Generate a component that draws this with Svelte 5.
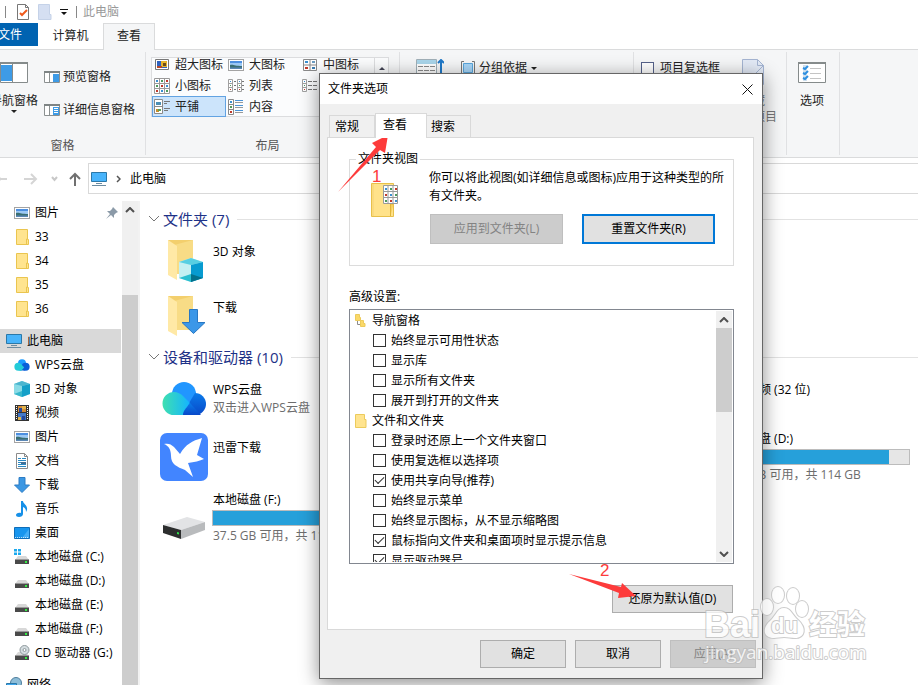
<script>
  const quick = [
    { icon: 'picture', name: '图片', pinned: true },
    { icon: 'folder', name: '33' },
    { icon: 'folder', name: '34' },
    { icon: 'folder', name: '35' },
    { icon: 'folder', name: '36' },
  ];
  const computer = [
    { icon: 'cloud', name: 'WPS云盘' },
    { icon: 'cube', name: '3D 对象' },
    { icon: 'film', name: '视频' },
    { icon: 'picture', name: '图片' },
    { icon: 'doc', name: '文档' },
    { icon: 'down', name: '下载' },
    { icon: 'music', name: '音乐' },
    { icon: 'desktop', name: '桌面' },
    { icon: 'sysdrive', name: '本地磁盘 (C:)' },
    { icon: 'drive', name: '本地磁盘 (D:)' },
    { icon: 'drive', name: '本地磁盘 (E:)' },
    { icon: 'drive', name: '本地磁盘 (F:)' },
    { icon: 'cd', name: 'CD 驱动器 (G:)' },
  ];
  const views = [
    { icon: 'xl', name: '超大图标' },
    { icon: 'picture', name: '大图标' },
    { icon: 'medium', name: '中图标' },
    { icon: 'small', name: '小图标' },
    { icon: 'list', name: '列表' },
    { icon: 'details', name: '' },
    { icon: 'tiles', name: '平铺', on: true },
    { icon: 'content', name: '内容' },
  ];
  const folders = [
    { icon: 'bigcube', name: '3D 对象' },
    { icon: 'bigdown', name: '下载' },
  ];
  const devices = [
    { icon: 'bigcloud', name: 'WPS云盘', note: '双击进入WPS云盘', col: 1, row: 1 },
    { icon: '', name: '腾讯视频 (32 位)', note: '', col: 3, row: 1 },
    { icon: 'bird', name: '迅雷下载', note: '', col: 1, row: 2 },
    { icon: 'bigdrive', name: '本地磁盘 (D:)', note: '12.4 GB 可用，共 114 GB', used: 89, col: 3, row: 2 },
    { icon: 'bigdrive', name: '本地磁盘 (F:)', note: '37.5 GB 可用，共 114 GB', used: 67, col: 1, row: 3 },
  ];
  let settings = $state([
    { icon: 'tree', name: '导航窗格' },
    { name: '始终显示可用性状态', on: false },
    { name: '显示库', on: false },
    { name: '显示所有文件夹', on: false },
    { name: '展开到打开的文件夹', on: false },
    { icon: 'minifolder', name: '文件和文件夹' },
    { name: '登录时还原上一个文件夹窗口', on: false },
    { name: '使用复选框以选择项', on: false },
    { name: '使用共享向导(推荐)', on: true },
    { name: '始终显示菜单', on: false },
    { name: '始终显示图标，从不显示缩略图', on: false },
    { name: '鼠标指向文件夹和桌面项时显示提示信息', on: true },
    { name: '显示驱动器号', on: true },
  ]);
  const three = [0, 1, 2];
  const dots = ['#3a8fd0', '#4d9a5c', '#c0392b'];
</script>

{#snippet icon(name)}
  {#if name === 'picture'}
    <svg width="16" height="16" viewBox="0 0 16 16"><rect x=".5" y="2.500" width="15" height="11" fill="#fff" stroke="#a3a3a3" /><rect x="2" y="4" width="12" height="8" fill="#9cc8f4" /><path d="M2 4h12v2H2z" fill="#4d8fe0" /><path d="M2 8c3-1 5 1 12 1v3H2z" fill="#3b6f72" /><path d="M2 10.500h12V12H2z" fill="#5b87b5" /></svg>
  {:else if name === 'folder'}
    <svg width="16" height="16" viewBox="0 0 16 16"><path d="M2.500.5h11v10h1v5h-12z" fill="#ffe48f" stroke="#eac54f" /><path d="M12.500 15v-5h1" fill="none" stroke="#eac54f" /></svg>
  {:else if name === 'minifolder'}
    <svg width="12" height="14" viewBox="0 0 12 14"><path d="M.5.5h9v5h1.500v8H.5z" fill="#ffe48f" stroke="#eccb5c" /></svg>
  {:else if name === 'tree'}
    <svg width="12" height="14" viewBox="0 0 12 14"><path d="M2.500 6v4.500H6" fill="none" stroke="#8c8c8c" /><path d="M.5.5h4v3h1v3h-5zM5.500 6.500h3v3h1.500v3H5.500z" fill="#fbd968" stroke="#eccb5c" /></svg>
  {:else if name === 'cloud'}
    <svg width="16" height="16" viewBox="0 0 44 40"><path d="M21 17a11 11 0 0 1 9 18H15z" fill="#0a58d6" /><circle cx="22" cy="15" r="11" fill="#1c9cff" /><circle cx="32" cy="25" r="11" fill="#0a5fd8" /><path d="M12 14a11 11 0 0 0 0 22h8l8-9-8-9a12 12 0 0 0-8-4z" fill="#23cbd8" /></svg>
  {:else if name === 'cube'}
    <svg width="16" height="16" viewBox="0 0 16 16"><path d="M0 3l8-3 8 3v10l-8 3-8-3z" fill="#8adbe6" /><path d="M0 3l8-3 8 3-8 2z" fill="#4cb6cf" /><path d="M8 5l8-2v10l-8 3z" fill="#14a0c8" /><path d="M0 13l8-3v6z" fill="#36b7cb" /></svg>
  {:else if name === 'film'}
    <svg width="16" height="16" viewBox="0 0 16 16"><path d="M1 0h14v16H1z" fill="#333" /><path d="M2.500 1v14M13.500 1v14" stroke="#fff" stroke-dasharray="1 1" /><path d="M4 1h8v6H4z" fill="#d38b38" /><path d="M4 8h8v7H4z" fill="#4378c9" /><path d="M5 3h3v4H5zM8 11h3v4H8z" fill="#25489b" /><path d="M8 1h4v3H8zM4 12h3v3H4z" fill="#e2b44c" /></svg>
  {:else if name === 'doc'}
    <svg width="16" height="16" viewBox="0 0 16 16"><path d="M2.500.5h8l3 3v12h-11z" fill="#fff" stroke="#8b8b8b" /><path d="M10.500.5v3h3" fill="none" stroke="#8b8b8b" /><path d="M4 5.500h3m1 0h4M4 7.500h8M4 9.500h3M4 11.500h8M4 13.500h8" stroke="#2b8ac4" /><path d="M7 9h5v2H7z" fill="#446f95" /></svg>
  {:else if name === 'down'}
    <svg width="16" height="16" viewBox="0 0 16 16"><path d="M5 .5h6V8h4.500L8 15.500.5 8H5z" fill="#3b97e3" stroke="#2c7cc4" /></svg>
  {:else if name === 'music'}
    <svg width="16" height="16" viewBox="0 0 16 16"><path d="M7 0h2c0 3 5 4 4 9l-1 2c0-3-1-4-3-5v7c0 2-2 3-4 3s-3-1-3-2 2-3 5-2z" fill="#1690e8" /></svg>
  {:else if name === 'desktop'}
    <svg width="16" height="16" viewBox="0 0 16 16"><path d="M.5 2.500h15v11H.5z" fill="#1795ee" stroke="#0f6db8" /><path d="M8 13l7-9v9z" fill="#43adf6" /><path d="M1 12.500h14" stroke="#fff" stroke-dasharray="1 1" opacity=".7" /></svg>
  {:else if name === 'drive' || name === 'sysdrive' || name === 'cd'}
    <svg width="16" height="16" viewBox="0 0 16 16"><path d="M4 7h8l3 4H1z" fill="#d8d8d8" /><path d="M1 11h14v4H1z" fill="#4a4a4a" /><path d="M1 10h14v1H1z" fill="#999" /><path d="M11 12h2v2h-2z" fill="#3e4" />
      {#if name === 'sysdrive'}<path d="M0 0h3v2.500H0zM4 0h3v2.500H4zM0 3.500h3V6H0zM4 3.500h3V6H4z" fill="#1ba9ee" />{/if}
      {#if name === 'cd'}<circle cx="10.500" cy="5" r="4.500" fill="#d5dde0" stroke="#8e999d" /><circle cx="10.500" cy="5" r="1.500" fill="#fff" stroke="#8e999d" />{/if}
    </svg>
  {:else if name === 'monitor'}
    <svg width="16" height="16" viewBox="0 0 16 16"><path d="M.5 1.500h15v9H.5z" fill="#48b4fb" stroke="#2b78a8" /><path d="M5 12.500h6M1 14.500h14" stroke="#6c8ba0" /></svg>
  {:else if name === 'network'}
    <svg width="16" height="16" viewBox="0 0 16 16"><circle cx="10" cy="6" r="5.500" fill="#8dbdd8" stroke="#4d7d9c" /><path d="M.5 6.500h10v6H.5z" fill="#3ea6ee" stroke="#2b78a8" /></svg>
  {:else if name === 'xl'}
    <svg width="16" height="16" viewBox="0 0 16 16"><path d="M1.500 2.500h13v10h-13z" fill="#fff" stroke="#777" /><path d="M3 4h10v7H3z" fill="#2f62bf" /><path d="M7 4h6v6H7z" fill="#e7b52b" /><path d="M3 9h5v2H3z" fill="#b7472a" /><path d="M9 6h3v3H9z" fill="#6a4a1a" /></svg>
  {:else if name === 'medium'}
    <svg width="16" height="16" viewBox="0 0 16 16"><path d="M1.500 2.500h13v11h-13zM8 2v12M1 8h14" fill="#fff" stroke="#8a8a8a" /><path d="M3 4h3v2H3z" fill="#3a8fd0" /><path d="M10 4h3v2h-3z" fill="#6b9bc0" /><path d="M3 10h3v2H3z" fill="#c0392b" /><path d="M10 10h3v2h-3z" fill="#3a7bb0" /></svg>
  {:else if name === 'small'}
    <svg width="16" height="16" viewBox="0 0 16 16"><path d="M.5.5h15v15H.5zM5.500 0v16M10.500 0v16M0 5.500h16M0 10.500h16" fill="#fff" stroke="#9a9a9a" />{#each three as r}{#each three as c}<rect x={2 + c * 5} y={2 + r * 5} width="2" height="2" fill={dots[(r + c) % 3]} />{/each}{/each}</svg>
  {:else if name === 'list' || name === 'details'}
    <svg width="16" height="16" viewBox="0 0 16 16"><path d="M.5 1.500h4v12h-4zM0 5.500h5M0 9.500h5" fill="#fff" stroke="#a0a0a0" />{#each three as r}<rect x="2" y={3 + r * 4} width="1" height="1" fill={dots[r]} /><path d={`M6 ${3.5 + r * 4}h${name === 'list' ? 2 : 10}`} stroke="#777" stroke-dasharray="4 1" />{/each}
      {#if name === 'list'}<path d="M9.500 1.500h4v12h-4zM9 5.500h5M9 9.500h5" fill="#fff" stroke="#a0a0a0" />{#each three as r}<rect x="11" y={3 + r * 4} width="1" height="1" fill={dots[r]} /><path d={`M14 ${3.5 + r * 4}h2`} stroke="#777" />{/each}{/if}</svg>
  {:else if name === 'tiles'}
    <svg width="16" height="16" viewBox="0 0 16 16"><path d="M.5.5h8v14h-8zM0 7.500h9" fill="#fff" stroke="#8a8a8a" /><path d="M2 3h5v3H2z" fill="#4c8fb5" /><path d="M2 10h3v3H2z" fill="#c98e2c" /><path d="M4 10h3v2H4z" fill="#58a05c" /><path d="M10 2.500h6M10 4.500h3M10 9.500h6M10 11.500h4" stroke="#777" /></svg>
  {:else if name === 'content'}
    <svg width="16" height="16" viewBox="0 0 16 16"><path d="M.5.5h5v15h-5zM0 5.500h6M0 10.500h6" fill="#fff" stroke="#8a8a8a" />{#each three as r}<rect x="2" y={2 + r * 5} width="2" height="2" fill={dots[r]} /><path d={`M7 ${1.5 + r * 5}h8`} stroke="#4a94d8" />{/each}<path d="M7 3.500h8M7 8.500h8M7 13.500h8" stroke="#999" /></svg>
  {:else if name === 'pane' || name === 'panelines'}
    <svg width="16" height="12" viewBox="0 0 16 12"><path d="M.5.5h15v11H.5z" fill="#fff" stroke="#8b9090" /><path d="M0 0h16v2H0z" fill="#7e8484" /><path d="M5.500 2v9" stroke="#8b9090" /><path d="M9 3h6v8H9z" fill="#3e9be6" />{#if name === 'panelines'}<path d="M10 4.500h4M10 6.500h4M10 8.500h4" stroke="#fff" />{/if}</svg>
  {:else if name === 'bigcube' || name === 'bigdown'}
    <svg width="48" height="48" viewBox="0 0 48 48"><path d="M8 3h25v34H12z" fill="#f3cf6d" /><path d="M14 8l19-5v34H17z" fill="#f8dc86" /><path d="M8 3l9 6v34l-9-5z" fill="#ffe9a6" />
      {#if name === 'bigcube'}<path d="M19 25l12-4 12 4v16l-12 4-12-4z" fill="#c4f0f2" /><path d="M19 25l12-4 12 4-12 3z" fill="#57cfe2" /><path d="M31 28l12-3v16l-12 4z" fill="#079bd0" /><path d="M19 41l12-4v8z" fill="#2bbfd0" /><path d="M31 37l12 4-12 4z" fill="#03718c" />
      {:else}<path d="M29.500 16.500h8v13H45L33.500 40.500 22 29.500h7.500z" fill="#3b97e8" stroke="#2878c4" />{/if}
    </svg>
  {:else if name === 'bigcloud'}
    <svg width="48" height="48" viewBox="0 0 48 48"><defs><linearGradient id="cg" x1="0" y1="0" x2="1" y2="0"><stop offset="0" stop-color="#3fe0b0" /><stop offset="1" stop-color="#14b4ff" /></linearGradient><linearGradient id="cb" x1="0" y1="0" x2="0" y2="1"><stop offset="0" stop-color="#0b7bea" /><stop offset="1" stop-color="#0848c8" /></linearGradient></defs>
      <circle cx="24" cy="19" r="12" fill="#2196ff" /><path d="M35 18a11 11 0 0 1 0 22H24l5-12z" fill="url(#cb)" /><path d="M14 17a11.500 11.500 0 0 0 0 23h10c0-2 0-4 6-12l-7-7a14 14 0 0 0-9-4z" fill="url(#cg)" /><path d="M23 40c0-4 3-7 7-12l11 12z" fill="url(#cb)" /></svg>
  {:else if name === 'bird'}
    <svg width="48" height="48" viewBox="0 0 48 48"><rect width="48" height="48" rx="7" fill="#4285ff" /><path d="M4 11c4-1 7 0 10 3l6 7c6-10 12-13 22-16l-5 17 7 4c-4 2-10 3-16 4l5 14-8-7c-8-3-14-6-14-14 0-6-2-10-7-12z" fill="#fff" /></svg>
  {:else if name === 'bigdrive'}
    <svg width="48" height="48" viewBox="0 0 48 48"><path d="M3 31l24-8 18 5-24 8z" fill="#e2e3e5" /><path d="M21 36l24-8v8l-24 9z" fill="#b9bbbd" /><path d="M3 31l18 5v9L3 39z" fill="#2c2e2e" /><path d="M17 38l2 .5v2l-2-.5z" fill="#2fe04a" /></svg>
  {/if}
{/snippet}

{#snippet chevron(dir)}
  <svg width="10" height="6" viewBox="0 0 10 6"><path d={dir === 'up' ? 'M1 5l4-4 4 4' : 'M1 1l4 4 4-4'} fill="none" stroke="#505050" stroke-width="2" /></svg>
{/snippet}

{#snippet section(title, items)}
  <section>
    <h2><svg width="12" height="8" viewBox="0 0 12 8"><path d="M1 1l5 5 5-5" fill="none" stroke="#777" /></svg>{title}</h2>
    <div class="items">
      {#each items as item}
        <div class="item" style:grid-column={item.col ?? 1} style:grid-row={item.row ?? 'auto'}>
          <span class="pic">{@render icon(item.icon)}</span>
          <div class="info">
            <span>{item.name}</span>
            {#if item.used}<div class="bar"><div style:width="{item.used}%"></div></div>{/if}
            <span class="note">{item.note ?? ''}</span>
          </div>
        </div>
      {/each}
    </div>
  </section>
{/snippet}

<div class="window">
  <header class="title">
    <i class="tick"></i>
    <svg width="14" height="16" viewBox="0 0 14 16"><path d="M1.500.5h8l3 3v12h-11z" fill="#fff" stroke="#777" /><path d="M9.500.5v3h3" fill="none" stroke="#777" /><path d="M4 9l2 2 5-5" fill="none" stroke="#ef5a1c" stroke-width="2" /></svg>
    <svg width="14" height="16" viewBox="0 0 14 16"><path d="M.5.5h11v10h1.500v5H.5z" fill="#d5dff2" stroke="#c5d2e8" /></svg>
    <svg width="8" height="6" viewBox="0 0 8 6"><path d="M0 0h8v1H0zM1 3h6L4 6z" fill="#111" /></svg>
    <i class="tick"></i>
    <span>此电脑</span>
  </header>

  <nav class="tabs">
    <button class="file">文件</button>
    <button class="computer">计算机</button>
    <button class="view">查看</button>
  </nav>

  <div class="ribbon">
    <div class="group panes">
      <div class="content">
        <button class="big navpane">
          <svg width="28" height="22" viewBox="0 0 28 22"><path d="M.5.5h27v20H.5z" fill="#fff" stroke="#858b8b" /><path d="M0 0h28v2H0z" fill="#858b8b" /><path d="M1 3h11v16H1z" fill="#3e9be6" /><path d="M12.500 2v18" stroke="#858b8b" /></svg>
          <span>导航窗格</span>
          <svg width="6" height="3" viewBox="0 0 6 3"><path d="M0 0h6L3 3z" fill="#222" /></svg>
        </button>
        <div class="stack">
          <button>{@render icon('pane')}预览窗格</button>
          <button>{@render icon('panelines')}详细信息窗格</button>
        </div>
      </div>
      <div class="label">窗格</div>
    </div>
    <div class="group layout">
      <div class="gallery">
        <div class="views">
          {#each views as v}
            <button class:on={v.on} aria-label={v.name || v.icon}>{@render icon(v.icon)}{v.name}</button>
          {/each}
        </div>
        <button class="more" aria-label="up"><svg width="6" height="3" viewBox="0 0 6 3"><path d="M0 3h6L3 0z" fill="#445" /></svg></button>
      </div>
      <div class="label">布局</div>
    </div>
    <div class="group current">
      <svg width="28" height="32" viewBox="0 0 28 32"><path d="M.5.5h20v30H.5z" fill="#fff" stroke="#a0b0b8" /><path d="M1 1h19v4H1z" fill="#a9d5ea" /><path d="M2 7.500h17M2 11.500h17M2 15.500h17" stroke="#8a8a8a" stroke-dasharray="5 1" /><path d="M25 2v28M22 4l3-3 3 3" fill="none" stroke="#1e78c8" stroke-width="2" /></svg>
      <button><svg width="14" height="14" viewBox="0 0 14 14"><path d="M3 .5H.5v13H3M11 .5h2.500v13H11" fill="none" stroke="#777" /><path d="M2.500 2.500h9v9h-9z" fill="#a8d6f8" stroke="#58a6dc" /></svg>分组依据<svg width="6" height="3" viewBox="0 0 6 3"><path d="M0 0h6L3 3z" fill="#222" /></svg></button>
    </div>
    <div class="group show">
      <label><input type="checkbox" />项目复选框</label>
      <button class="hide"><svg width="22" height="26" viewBox="0 0 22 26"><path d="M.5.5h15l6 6v19H.5z" fill="#e3eaf6" stroke="#a5b5d2" /><path d="M15.500.5v6h6L10 18" fill="none" stroke="#a5b5d2" /></svg><span>隐藏<br />所选项目</span></button>
    </div>
    <div class="group options">
      <button class="big">
        <svg width="28" height="22" viewBox="0 0 28 22"><path d="M.5.5h27v20H.5z" fill="#fff" stroke="#858b8b" /><path d="M0 0h28v2H0z" fill="#858b8b" /><path d="M5 3h4v16H5z" fill="#cfe0ee" /><path d="M12 6.500h11M12 11.500h11M12 16.500h11" stroke="#c4c4c4" /><path d="M5 6l2 1 3-3M5 11l2 1 3-3M5 16l2 1 3-3" fill="none" stroke="#2d8fe0" stroke-width="2" /></svg>
        <span>选项</span>
      </button>
    </div>
  </div>

  <div class="address">
    <svg class="arrows" width="82" height="14" viewBox="0 0 82 14" fill="none"><path d="M0 7h7M0 5l-2 2 2 2M24 7h12M31 2l5 5-5 5" stroke="#d5d5d5" stroke-width="2" /><path d="M52 5l2.500 3L57 5" stroke="#c8c8c8" stroke-width="2" /><path d="M75 14V2M70 7l5-5 5 5" stroke="#707070" stroke-width="2" /></svg>
    <div class="path">{@render icon('monitor')}<svg width="5" height="8" viewBox="0 0 5 8"><path d="M1 1l3 3-3 3" fill="none" stroke="#555" stroke-width="1.500" /></svg><a href="#pc">此电脑</a></div>
  </div>

  <div class="body">
    <aside>
      <div class="tree">
        {#each quick as q}
          <a href="#q">{@render icon(q.icon)}{q.name}{#if q.pinned}<svg class="pin" width="12" height="12" viewBox="0 0 12 12"><path d="M7 0l5 5-2 1-2 2v3L5 8l-5 4 4-5-3-3h3l2-2z" fill="#8b9aa8" /></svg>{/if}</a>
        {/each}
        <a href="#pc" class="root sel">{@render icon('monitor')}此电脑</a>
        {#each computer as c}
          <a href="#c">{@render icon(c.icon)}{c.name}</a>
        {/each}
        <a href="#net" class="root">{@render icon('network')}网络</a>
      </div>
      <div class="scroll side"><span>{@render chevron('up')}</span><div></div></div>
    </aside>
    <main>
      {@render section('文件夹 (7)', folders)}
      {@render section('设备和驱动器 (10)', devices)}
    </main>
  </div>

  <div class="dialog" role="dialog" aria-label="文件夹选项">
    <div class="caption"><span>文件夹选项</span><button aria-label="close"><svg width="11" height="11" viewBox="0 0 11 11"><path d="M.5.5l10 10M10.500.5l-10 10" stroke="#111" /></svg></button></div>
    <div class="dtabs"><button>常规</button><button class="active">查看</button><button>搜索</button></div>
    <div class="panel">
      <fieldset>
        <legend>文件夹视图</legend>
        <svg width="30" height="36" viewBox="0 0 30 36"><path d="M1.500 1.500h22v33h-22z" fill="#ffe28a" stroke="#e8c04a" /><path d="M3 2v32" stroke="#f5d272" /><path d="M20.500 34V22h3" fill="#f7cf5c" stroke="#e0b53c" /><path d="M13.500 3.500h14v18h-14zM18 3v18M23 3v18M13 9.500h15M13 15.500h15" fill="#fff" stroke="#9a9a9a" />{#each three as r}{#each three as c}<rect x={15 + c * 5} y={6 + r * 6} width="2" height="2" fill={dots[(r * 2 + c) % 3]} />{/each}{/each}</svg>
        <div>
          <p>你可以将此视图(如详细信息或图标)应用于这种类型的所有文件夹。</p>
          <div class="pair"><button class="btn" disabled>应用到文件夹(L)</button><button class="btn focus">重置文件夹(R)</button></div>
        </div>
      </fieldset>
      <div class="advanced">高级设置:</div>
      <div class="listbox">
        <ul>
          {#each settings as s}
            <li>
              {#if s.icon}<span class="head">{@render icon(s.icon)}{s.name}</span>
              {:else}<label><input type="checkbox" bind:checked={s.on} />{s.name}</label>{/if}
            </li>
          {/each}
        </ul>
        <div class="scroll"><span>{@render chevron('up')}</span><div></div><span class="end">{@render chevron('down')}</span></div>
      </div>
      <button class="btn restore">还原为默认值(D)</button>
    </div>
    <div class="actions"><button class="btn">确定</button><button class="btn">取消</button><button class="btn" disabled>应用(A)</button></div>
  </div>

  <svg class="marks" width="918" height="685" viewBox="0 0 918 685">
    <g fill="#fd3b3b">
      <path d="M338 192L376 147l-4-4 16-8-3 18-5-3z" />
      <path d="M569 574l52 13 1-4 14 13-18 2 1-5z" />
      <text x="372" y="182" font-size="17">1</text>
      <text x="600" y="576" font-size="17">2</text>
    </g>
    <g fill="#fff" stroke="#bbb" paint-order="stroke" stroke-width="2" opacity=".75">
      <ellipse cx="778" cy="595" rx="6" ry="8" /><ellipse cx="793" cy="596" rx="6" ry="8" /><ellipse cx="767" cy="607" rx="6" ry="8" /><ellipse cx="802" cy="609" rx="6" ry="8" />
      <path d="M784 608c7 0 8 7 14 12 9 8 7 18-3 18-4 0-7-1-11-1s-7 1-10 1c-11 0-12-10-4-17 6-5 7-13 14-13z" />
      <text x="704" y="637" font-size="36" font-weight="700">Bai</text>
      <text x="771" y="633" font-size="22" font-weight="700">du</text>
      <text class="cjk" x="809" y="635" font-size="28" font-weight="700">经验</text>
      <text class="site" x="705" y="659" font-size="19">jingyan.baidu.com</text>
    </g>
  </svg>
</div>

<style>
  :global(body) { background: #fff; }
  .window {
    position: relative; height: 100vh; overflow: hidden; display: flex; flex-direction: column;
    font: 12px/18px "Open Sans", "Noto Sans CJK SC", sans-serif; color: #000; background: #fff; white-space: nowrap;
  }
  svg { display: block; flex: none; }
  button { font: inherit; color: inherit; background: none; border: 0; padding: 0; margin: 0; }
  a { color: inherit; text-decoration: none; }
  input { appearance: none; width: 13px; height: 13px; margin: 0; border: 1px solid #333; background: #fff; flex: none; }

  .title { height: 23px; display: flex; align-items: center; padding-left: 5px; color: #999; }
  .title svg { margin-right: 8px; }
  .title .tick { width: 1px; height: 12px; background: #888; margin-right: 10px; }
  .title svg + .tick { margin-right: 6px; }

  .tabs { display: flex; height: 27px; border-bottom: 1px solid #dadbdc; box-sizing: border-box; color: #222; }
  .tabs .file { width: 38px; height: 23px; background: #0063b1; color: #fff; text-align: left; text-indent: -2px; }
  .tabs .computer { width: 65px; height: 25px; }
  .tabs .view { width: 52px; height: 27px; border: 1px solid #dadbdc; border-bottom: 0; background: #f5f6f7; padding-bottom: 2px; }

  .ribbon { display: flex; height: 107px; background: #f5f6f7; border-bottom: 1px solid #dadbdc; color: #222; flex: none; }
  .group { box-sizing: border-box; height: 103px; margin-top: 2px; border-right: 1px solid #e0e1e3; display: flex; flex-direction: column; justify-content: space-between; flex: none; }
  .group button { display: flex; align-items: center; }
  .label { text-align: center; color: #555; }
  .panes { width: 146px; overflow: hidden; padding-top: 10px; }
  .panes .label { padding-right: 20px; }
  .panes .content { display: flex; gap: 6px; margin-left: -10px; }
  .group .big { flex-direction: column; gap: 8px; }
  .group .navpane { gap: 0; width: 48px; justify-content: flex-start; }
  .navpane span { margin-top: 8px; }
  .stack { display: flex; flex-direction: column; gap: 15px; padding-top: 6px; }
  .stack button { gap: 3px; }
  .layout { width: 254px; padding: 5px 10px 0 5px; }
  .gallery { display: flex; border: 1px solid #dcdddf; background: #fbfcfd; height: 58px; }
  .views { display: grid; grid-template-columns: 74px 74px 74px; grid-auto-rows: 21px; margin-top: -4px; height: 64px; flex: 1; }
  .views button { gap: 5px; padding-left: 1px; border: 1px solid transparent; }
  .views .on { background: #cce4fb; border-color: #62a3e2; }
  .gallery .more { width: 14px; height: 20px; border-left: 1px solid #dcdddf; justify-content: center; }
  .layout .label { padding-right: 5px; }
  .current { width: 234px; padding: 7px 0 0 16px; flex-direction: row; justify-content: flex-start; gap: 17px; align-items: flex-start; }
  .current button { gap: 4px; }
  .show { width: 153px; padding: 7px 9px 0 7px; flex-direction: row; align-items: flex-start; }
  .show label { display: flex; align-items: center; gap: 6px; }
  .show input { border-color: #56628a; }
  .group .hide { flex-direction: column; gap: 8px; line-height: 16px; color: #777; }
  .options { width: 53px; padding: 10px 2px 0 0; align-items: center; justify-content: flex-start; }

  .address { display: flex; padding-top: 5px; height: 38px; flex: none; }
  .arrows { width: 82px; margin: 9px 6px 0 0; }
  .path { flex: 1; height: 29px; border: 1px solid #d9d9d9; border-right: 0; display: flex; align-items: center; gap: 9px; padding-left: 2px; }

  .body { display: flex; flex: 1; min-height: 0; }
  aside { display: flex; width: 138px; border-right: 2px solid #f2f2f2; flex: none; }
  .tree { width: 121px; margin-right: 1px; overflow: hidden; }
  .tree a { display: flex; align-items: center; gap: 5px; height: 24px; padding-left: 14px; }
  .tree .root { padding-left: 6px; margin-top: 8px; }
  .tree .sel { background: #d9d9d9; }
  .pin { margin-left: auto; margin-right: 3px; }
  .scroll { width: 16px; background: #f0f0f0; display: flex; flex-direction: column; }
  .scroll span { height: 17px; display: grid; place-items: center; }
  .scroll div { height: 84px; background: #cdcdcd; }
  .scroll .end { margin-top: auto; }
  .side span { height: 18px; padding-bottom: 76px; }
  .side div { flex: 1; }

  main { flex: 1; padding: 7px 0 0 8px; min-width: 0; }
  section { margin-bottom: 5px; }
  h2 { display: flex; align-items: center; gap: 3px; margin: 0; font-size: 15px; line-height: 22px; font-weight: 400; color: #1e3287; }
  h2::after { content: ""; flex: 1; height: 1px; margin-left: 5px; background: #e2e2e2; }
  .items { display: grid; grid-template-columns: repeat(3, 255px); row-gap: 7px; padding: 6px 0 0 12px; }
  .item { display: flex; align-items: center; gap: 4px; min-height: 49px; }
  .pic { width: 48px; }
  .info { display: flex; flex-direction: column; }
  .info > span { padding-left: 1px; }
  .info .note { color: #6d6d6d; min-height: 18px; }
  .bar { width: 186px; height: 14px; margin: 1px 0; border: 1px solid #bcbcbc; background: #e6e6e6; }
  .bar div { height: 100%; background: #26a0da; }

  .dialog { position: absolute; left: 319px; top: 73px; width: 442px; background: #f0f0f0; border: 1px solid #666; box-shadow: 0 4px 18px rgba(0, 0, 0, .45); }
  .caption { height: 30px; background: #fff; display: flex; align-items: center; justify-content: space-between; padding: 0 9px 0 8px; }
  .dtabs { display: flex; align-items: flex-end; padding: 9px 0 0 9px; }
  .dtabs button { box-sizing: border-box; height: 22px; width: 46px; border: 1px solid #d9d9d9; border-bottom: 0; text-align: left; padding-left: 5px; }
  .dtabs .active { width: 52px; height: 25px; background: #fff; margin-bottom: -1px; padding: 0 0 2px 7px; z-index: 1; }
  .dtabs button:last-child { border-left: 0; padding-left: 4px; width: 44px; }
  .panel { margin: 0 8px 0 7px; padding: 12px 19px 16px 21px; border: 1px solid #d9d9d9; background: #fff; display: flex; flex-direction: column; }
  fieldset { margin: 0; border: 1px solid #dcdcdc; padding: 0 6px 21px 20px; display: flex; gap: 29px; white-space: normal; min-width: 0; }
  fieldset > svg { margin-top: 14px; }
  legend { margin-left: -14px; padding: 0 2px; }
  p { margin: 0; padding-top: 1px; }
  .pair { display: flex; gap: 19px; margin: 9px 0 0 1px; }
  .btn { box-sizing: border-box; height: 28px; border: 1px solid #adadad; background: #e1e1e1; }
  .btn:disabled { background: #ccc; border-color: #bfbfbf; color: #838383; }
  .pair .btn { width: 133px; height: 30px; }
  .pair .focus { border: 2px solid #0078d7; }
  .advanced { margin-top: 22px; padding-bottom: 3px; }
  .listbox { display: flex; height: 251px; border: 1px solid #828790; padding: 1px; overflow: hidden; }
  ul { list-style: none; margin: 0; padding: 0; flex: 1; overflow: hidden; }
  li { height: 20px; }
  .head, li label { display: flex; align-items: center; height: 20px; gap: 5px; padding-left: 4px; }
  li label { height: 19px; padding-left: 22px; }
  li input:checked { display: grid; place-items: center; }
  li input:checked::before { content: ""; width: 8px; height: 4px; border: solid #333; border-width: 0 0 1px 1px; transform: rotate(-45deg) translate(1px, -1px); }
  .restore { width: 121px; align-self: flex-end; margin: 21px 1px 0 0; }
  .actions { display: flex; justify-content: flex-end; gap: 9px; padding: 10px 6px; }
  .actions .btn { width: 86px; }

  .marks { position: absolute; left: 0; top: 0; pointer-events: none; font-family: "Liberation Sans", sans-serif; }
  .cjk { font-family: "Noto Sans CJK SC", sans-serif; }
  .site { font-family: "Open Sans", sans-serif; }
</style>
